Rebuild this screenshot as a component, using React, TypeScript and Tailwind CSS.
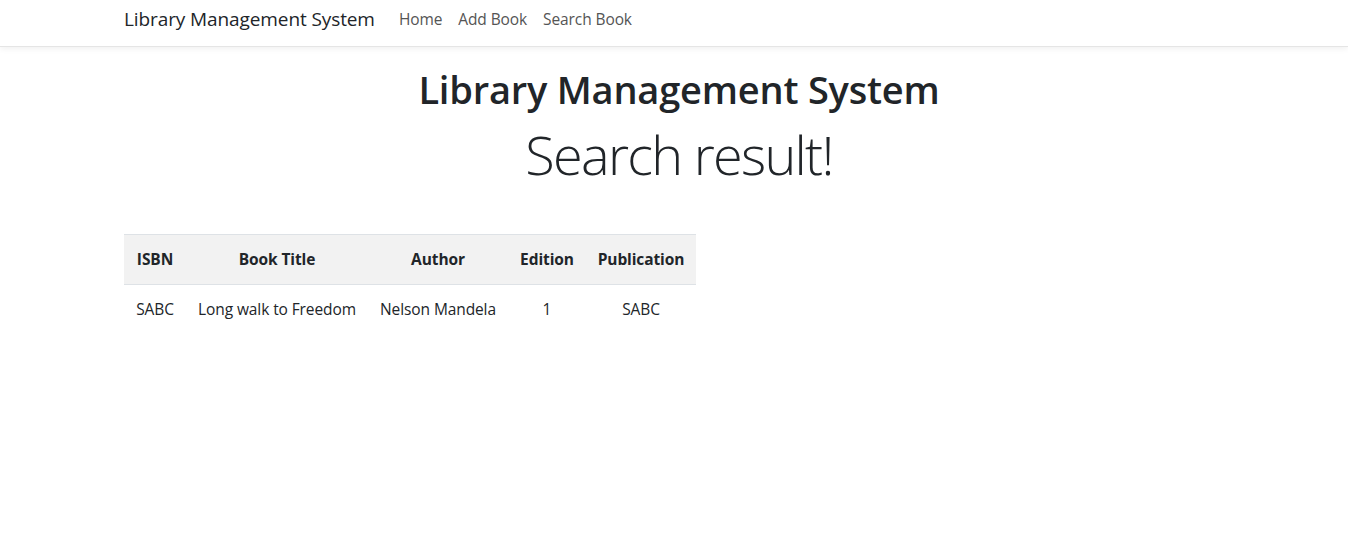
export default function App() {
  const font = { fontFamily: '"Open Sans", "Noto Sans", sans-serif' };
  return (
    <div className="min-h-[536px] bg-white text-[#212529]" style={font}>
      <nav className="h-[47px] border-b border-[#e5e5e5] shadow-[0_2px_6px_rgba(0,0,0,0.06)] flex items-start">
        <div className="pl-[124px] pt-[6px] flex items-center">
          <span className="text-[19px] leading-[26px] text-[#212529] tracking-[-0.1px] mr-[24px]">Library Management System</span>
          <div className="flex gap-[16px] text-[15.5px] leading-[26px] text-[#555] tracking-[-0.1px]">
            <span>Home</span>
            <span>Add Book</span>
            <span>Search Book</span>
          </div>
        </div>
      </nav>
      <div className="flex flex-col items-center pl-[10px]">
        <h1 className="mt-[18px] text-[38px] font-semibold leading-[48px] tracking-[-0.2px]">Library Management System</h1>
        <h2 className="mt-[9px] text-[54px] font-light leading-[64px] tracking-[-1.7px]">Search result!</h2>
      </div>
      <div className="pl-[124px] mt-[48px]">
        <table className="border-collapse text-[15.5px] tracking-[-0.1px]">
          <thead>
            <tr className="bg-[#f2f2f2] border-t border-b border-[#dee2e6] h-[50px]">
              <th className="w-[62px] text-center font-bold">ISBN</th>
              <th className="w-[182px] text-center font-bold">Book Title</th>
              <th className="w-[140px] text-center font-bold">Author</th>
              <th className="w-[78px] text-center font-bold">Edition</th>
              <th className="w-[110px] text-center font-bold">Publication</th>
            </tr>
          </thead>
          <tbody>
            <tr className="h-[50px]">
              <td className="text-center">SABC</td>
              <td className="text-center">Long walk to Freedom</td>
              <td className="text-center">Nelson Mandela</td>
              <td className="text-center">1</td>
              <td className="text-center">SABC</td>
            </tr>
          </tbody>
        </table>
      </div>
    </div>
  );
}
